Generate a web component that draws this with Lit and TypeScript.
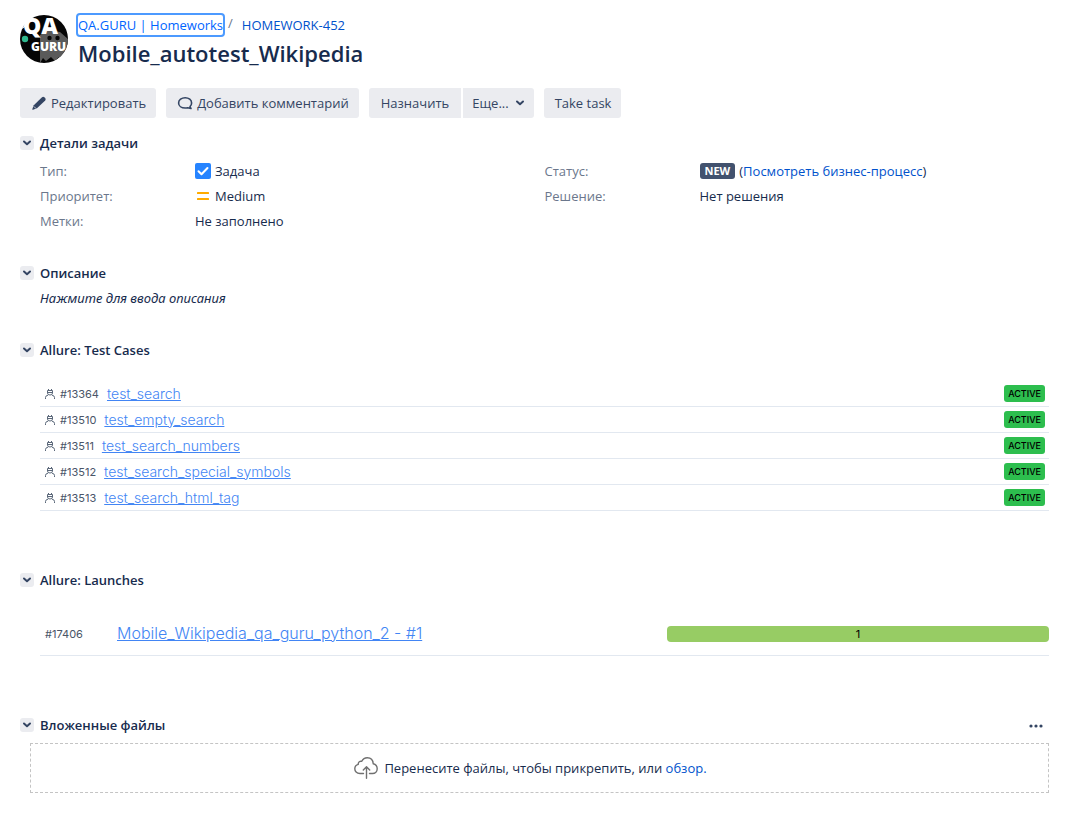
import { LitElement, html, css, svg, nothing } from "lit";
import { customElement, property, state } from "lit/decorators.js";

const chevron = svg`<path d="M2 2.500 L5 5.200 L8 2.500" fill="none" stroke="currentColor" stroke-width="2" stroke-linecap="round" stroke-linejoin="round"/>`;

@customElement("project-avatar")
class ProjectAvatar extends LitElement {
  static styles = css`
    :host { display: block; flex: none; }
    svg { display: block; overflow: visible; }
    .mark { font-family: "Open Sans", sans-serif; font-weight: 800; fill: #fff; }
    .qa { font-size: 23px; }
    .guru { font-size: 12px; }
  `;
  render() {
    return html`<svg width="48" height="48" viewBox="0 0 48 48" role="img" aria-label="QA.GURU">
      <defs><clipPath id="disc"><circle cx="24" cy="24" r="24"/></clipPath></defs>
      <g clip-path="url(#disc)">
        <rect width="48" height="48" fill="#050505"/>
        <path d="M20 48 V20 L28 15 L40 17 L48 24 V42 L43 46 L39 42 L35 46 L31 42 L26 46 L23 43 Z" fill="#5a5a5a"/>
        <path d="M0 0 H18 L10 4 L5 12 L2 14 Z" fill="#fff"/>
        <circle cx="29.500" cy="23" r="2.200" fill="#050505"/>
        <circle cx="37.500" cy="23" r="2.200" fill="#050505"/>
        <circle cx="5" cy="24" r="3.200" fill="#2fb88f"/>
      </g>
      <text class="mark qa" x="3" y="19">QA</text>
      <text class="mark guru" x="11" y="36">GURU</text>
    </svg>`;
  }
}

@customElement("issue-section")
class IssueSection extends LitElement {
  @property() heading = "";
  @property({ type: Boolean }) menu = false;
  @state() private open = true;

  static styles = css`
    :host { display: block; }
    .head { display: flex; align-items: center; gap: 6px; height: 20px; }
    .toggle {
      width: 14px; height: 14px; padding: 0; border: 0; border-radius: 3px;
      background: #ebecf0; color: #344563; display: grid; place-items: center; cursor: pointer;
    }
    h2 { margin: 0; font-size: 13px; line-height: 20px; font-weight: 600; color: #172b4d; flex: 1; }
    .more { border: 0; background: none; padding: 2px 6px 0; height: 20px; color: #344563; display: grid; place-items: center; cursor: pointer; }
    svg { display: block; }
  `;
  render() {
    return html`
      <div class="head">
        <button class="toggle" aria-label=${this.heading} aria-expanded=${this.open} @click=${() => (this.open = !this.open)}>
          <svg width="10" height="8" viewBox="0 0 10 8">${chevron}</svg>
        </button>
        <h2>${this.heading}</h2>
        ${this.menu
          ? html`<button class="more" aria-label="Действия">
              <svg width="14" height="4" viewBox="0 0 14 4" fill="currentColor"><circle cx="2" cy="2" r="1.600"/><circle cx="7" cy="2" r="1.600"/><circle cx="12" cy="2" r="1.600"/></svg>
            </button>`
          : nothing}
      </div>
      ${this.open ? html`<slot></slot>` : nothing}
    `;
  }
}

const testCases = [
  { id: 13364, name: "test_search" },
  { id: 13510, name: "test_empty_search" },
  { id: 13511, name: "test_search_numbers" },
  { id: 13512, name: "test_search_special_symbols" },
  { id: 13513, name: "test_search_html_tag" },
];

@customElement("app-root")
class AppRoot extends LitElement {
  static styles = css`
    :host {
      display: block; box-sizing: border-box; padding: 15px 20px 20px;
      font-family: "Open Sans", "Noto Sans", sans-serif; font-size: 13px; line-height: 20px;
      color: #172b4d; background: #fff;
    }
    a { color: #0052cc; text-decoration: none; }
    svg { display: block; flex: none; }
    header { display: flex; gap: 10px; }
    .crumbs { display: flex; align-items: center; height: 20px; }
    .crumbs a:first-child { outline: 2px solid #4c9aff; outline-offset: 0; border-radius: 2px; color: #0065ff; }
    .slash { color: #6b778c; padding: 0 9px 4px 5px; }
    h1 { margin: 4px 0 0; font-size: 22px; line-height: 28px; font-weight: 600; }
    .toolbar { display: flex; flex-wrap: wrap; gap: 10px; margin-top: 21px; }
    .group { display: flex; gap: 2px; }
    .btn {
      display: flex; align-items: center; gap: 4px; height: 30px; padding: 0 10px 0 11px; border: 0; border-radius: 3px;
      background: #ebecf0; color: #344563; font: inherit; cursor: pointer;
    }
    .group .btn:first-child { border-radius: 3px 0 0 3px; padding: 0 12px; }
    .group .btn:last-child { border-radius: 0 3px 3px 0; padding: 0 9px; gap: 6px; }
    .details { margin-top: 15px; }
    .fields { display: grid; grid-template-columns: 1fr 1fr; padding: 5px 0 0 20px; }
    dl { margin: 0; display: grid; grid-template-columns: 155px 1fr; grid-auto-rows: 25px; align-content: start; align-items: center; }
    dt { color: #6b778c; }
    dd { margin: 0; display: flex; align-items: center; gap: 4px; }
    .lozenge { background: #42526e; color: #fff; font-size: 11px; line-height: 16px; font-weight: 700; padding: 0 5px; border-radius: 3px; }
    .description { margin-top: 30px; }
    .description p { margin: 5px 0 0; padding-left: 20px; font-family: "Noto Sans", sans-serif; font-style: italic; }
    .cases { margin-top: 32px; }
    .cases ul, .launches ul { list-style: none; margin: 0; padding: 0 0 0 20px; font-family: Inter, sans-serif; }
    .cases ul { padding-top: 21px; }
    .case { display: flex; align-items: center; height: 25px; border-bottom: 1px solid #e2e8f0; padding: 0 4px 0 5px; }
    .id { font-size: 11px; color: #4a5568; }
    .case .id { margin: 0 8px 0 5px; }
    .allure { color: #4285f4; text-decoration: underline; font-size: 14px; font-weight: 300; }
    .active { margin-left: auto; background: #2dbe4e; color: #000; font-size: 9px; line-height: 17px; font-weight: 500; padding: 0 4px; border-radius: 3px; }
    .launches { margin-top: 59px; }
    .launches ul { padding-top: 22px; }
    .launch { display: grid; grid-template-columns: 72px 590fr 410fr; align-items: center; height: 43px; border-bottom: 1px solid #e2e8f0; padding-left: 5px; }
    .launch .allure { font-size: 16px; }
    .bar { background: #97cc64; color: #000; border-radius: 4px; height: 16px; line-height: 16px; font-size: 11px; text-align: center; }
    .files { margin-top: 59px; }
    .drop { margin: 8px 0 0 10px; padding-right: 18px; height: 48px; border: 1px dashed #c4c4c4; display: flex; align-items: center; justify-content: center; gap: 6px; }
  `;

  render() {
    return html`
      <header>
        <project-avatar></project-avatar>
        <div>
          <nav class="crumbs"><a href="#">QA.GURU | Homeworks</a><span class="slash">/</span><a href="#">HOMEWORK-452</a></nav>
          <h1>Mobile_autotest_Wikipedia</h1>
        </div>
      </header>

      <div class="toolbar">
        <button class="btn">
          <svg width="16" height="16" viewBox="0 0 16 16" fill="currentColor"><path d="M11 2.300 Q12.200 1.200 13.400 2.300 L14.200 3.100 Q15.200 4.300 14.200 5.400 L6 13.300 L2 14.800 Q1.100 15 1.300 14.100 L2.800 10.200 Z"/><path d="M3 11.500 L5 13.500" stroke="#ebecf0" stroke-width="0.800"/></svg>
          Редактировать
        </button>
        <button class="btn">
          <svg width="16" height="16" viewBox="0 0 16 16" fill="none" stroke="currentColor" stroke-width="1.600" stroke-linejoin="round" stroke-linecap="round"><path d="M13 11.500 Q14.600 10 14.600 7.900 C14.600 4.900 11.800 2.800 8.200 2.800 S1.600 4.900 1.600 7.900 S4.500 13 8.200 13 Q9.500 13 10.700 12.700 L14 13.500 Z"/></svg>
          Добавить комментарий
        </button>
        <div class="group">
          <button class="btn">Назначить</button>
          <button class="btn">Еще...<svg width="10" height="8" viewBox="0 0 10 8">${chevron}</svg></button>
        </div>
        <button class="btn">Take task</button>
      </div>

      <issue-section class="details" heading="Детали задачи">
        <div class="fields">
          <dl>
            <dt>Тип:</dt>
            <dd><svg width="16" height="16" viewBox="0 0 16 16"><rect width="16" height="16" rx="2" fill="#2684ff"/><path d="M3.500 8.300 L6.500 11.300 L12.500 5" fill="none" stroke="#fff" stroke-width="2" stroke-linecap="round" stroke-linejoin="round"/></svg>Задача</dd>
            <dt>Приоритет:</dt>
            <dd><svg width="16" height="16" viewBox="0 0 16 16" fill="#ffab00"><rect x="2" y="4" width="12" height="2" rx="0.500"/><rect x="2" y="10" width="12" height="2" rx="0.500"/></svg>Medium</dd>
            <dt>Метки:</dt>
            <dd>Не заполнено</dd>
          </dl>
          <dl>
            <dt>Статус:</dt>
            <dd><span class="lozenge">NEW</span><span>(<a href="#">Посмотреть бизнес-процесс</a>)</span></dd>
            <dt>Решение:</dt>
            <dd>Нет решения</dd>
          </dl>
        </div>
      </issue-section>

      <issue-section class="description" heading="Описание">
        <p>Нажмите для ввода описания</p>
      </issue-section>

      <issue-section class="cases" heading="Allure: Test Cases">
        <ul>
          ${testCases.map(
            (c) => html`<li class="case">
              <svg width="10" height="10" viewBox="0 0 10 10" fill="none" stroke="#5a6779" stroke-width="1"><path d="M2.500 1.500 H7.500 V4 Q7.500 6 5 6 T2.500 4 Z M2 3.500 H8 M3.500 0 V1.500 M6.500 0 V1.500 M0.500 10 V8.500 Q0.500 6.500 3 6.200 M9.500 10 V8.500 Q9.500 6.500 7 6.200"/></svg>
              <span class="id">#${c.id}</span>
              <a class="allure" href="#">${c.name}</a>
              <span class="active">ACTIVE</span>
            </li>`
          )}
        </ul>
      </issue-section>

      <issue-section class="launches" heading="Allure: Launches">
        <ul>
          <li class="launch">
            <span class="id">#17406</span>
            <span><a class="allure" href="#">Mobile_Wikipedia_qa_guru_python_2 - #1</a></span>
            <div class="bar">1</div>
          </li>
        </ul>
      </issue-section>

      <issue-section class="files" heading="Вложенные файлы" menu>
        <div class="drop">
          <svg width="24" height="22" viewBox="0 0 24 22" fill="none" stroke="#707070" stroke-width="1.400" stroke-linecap="round" stroke-linejoin="round"><path d="M9.500 16.500 H6 C2.500 16.500 0.800 14.300 0.800 11.800 C0.800 9.300 2.500 7.800 4.300 7.300 C4 5 6 3.800 7.800 4.300 C9 1.800 11 0.800 13.300 0.800 C17 0.800 19 3.500 19.200 6.800 C21.800 7.500 23.200 9.300 23.200 11.800 C23.200 14.500 21.200 16.500 18.500 16.500 H15.500 M12.500 21.300 V9.800 M9.300 13 L12.500 9.800 L15.700 13"/></svg>
          <span>Перенесите файлы, чтобы прикрепить, или <a href="#">обзор.</a></span>
        </div>
      </issue-section>
    `;
  }
}
